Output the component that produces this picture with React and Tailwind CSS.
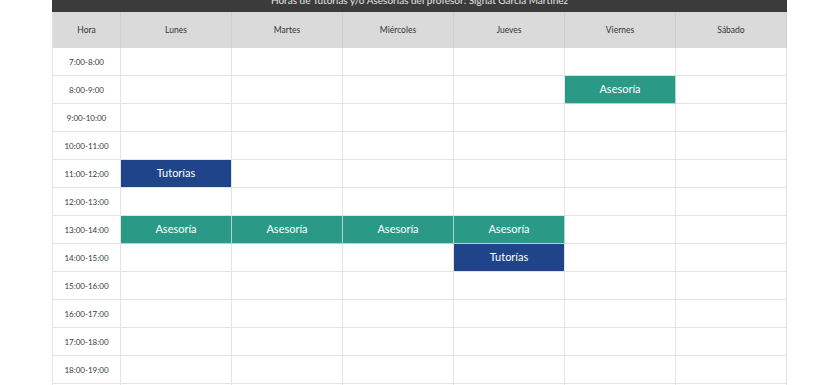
import React from "react";

const days = ["Lunes", "Martes", "Miércoles", "Jueves", "Viernes", "Sábado"];
const hours = [
  "7:00-8:00","8:00-9:00","9:00-10:00","10:00-11:00","11:00-12:00","12:00-13:00",
  "13:00-14:00","14:00-15:00","15:00-16:00","16:00-17:00","17:00-18:00","18:00-19:00","19:00-20:00",
];
const events = {
  "8:00-9:00": { 4: "A" },
  "11:00-12:00": { 0: "T" },
  "13:00-14:00": { 0: "A", 1: "A", 2: "A", 3: "A" },
  "14:00-15:00": { 3: "T" },
};

export default function App() {
  return (
    <div className="w-[840px] h-[385px] overflow-hidden bg-white" style={{ fontFamily: "Lato, 'Open Sans', sans-serif" }}>
      <div className="ml-[52px] w-[735px]">
        <div className="h-[12px] bg-[#3b3b3b] overflow-hidden flex justify-center">
          <div className="text-[10px] leading-[10px] text-[#e6e6e6] mt-[-5px] whitespace-nowrap">
            Horas de Tutorías y/o Asesorías del profesor: Signat García Martínez
          </div>
        </div>
        <div className="grid grid-cols-[68px_repeat(6,111px)] border-l border-[#e3e3e3]">
          <div className="h-[36px] bg-[#dadada] border-r border-[#cfcfcf] flex items-center justify-center text-[8.5px] text-[#333]">Hora</div>
          {days.map((d) => (
            <div key={d} className="h-[36px] bg-[#dadada] border-r border-[#cfcfcf] flex items-center justify-center text-[8.5px] text-[#333]">{d}</div>
          ))}
          {hours.map((h) => (
            <React.Fragment key={h}>
              <div className="h-[28px] border-r border-b border-[#e3e3e3] flex items-center justify-center text-[8px] text-[#3a3a3a]">{h}</div>
              {days.map((d, i) => {
                const ev = events[h]?.[i];
                if (ev === "A")
                  return (
                    <div key={d} className="h-[28px] bg-[#2a9a87] border-r border-b border-[#a9d8cf] flex items-center justify-center text-[11px] text-white">Asesoría</div>
                  );
                if (ev === "T")
                  return (
                    <div key={d} className="h-[28px] bg-[#1f4489] border-r border-b border-[#dfe3ea] flex items-center justify-center text-[11px] text-white">Tutorías</div>
                  );
                return <div key={d} className="h-[28px] border-r border-b border-[#e3e3e3]" />;
              })}
            </React.Fragment>
          ))}
        </div>
      </div>
    </div>
  );
}
